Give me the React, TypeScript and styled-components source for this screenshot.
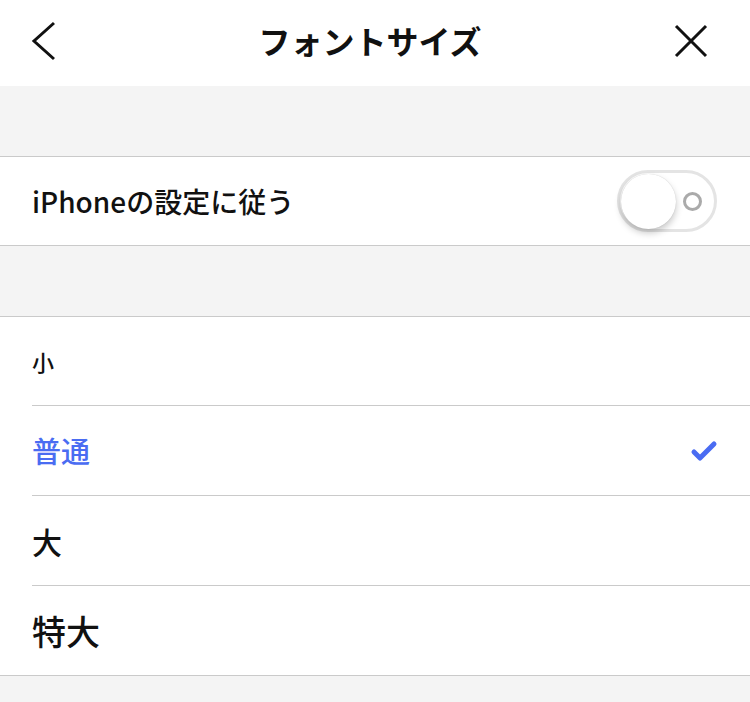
import React, { useState } from 'react';
import styled, { createGlobalStyle } from 'styled-components';

const GlobalStyle = createGlobalStyle`
    html, body {
        margin: 0;
        padding: 0;
        background: #f4f4f4;
        font-family: "Noto Sans CJK JP", "Noto Sans", sans-serif;
        color: #111;
    }
`;

const Page = styled.div`
    width: 750px;
    min-height: 702px;
    background: #f4f4f4;
`;

const Header = styled.div`
    height: 86px;
    background: white;
    display: flex;
    align-items: center;
    justify-content: space-between;
    padding: 0 42px 4px 30px;
    box-sizing: border-box;
    .title{
        font-size: 32px;
        font-weight: 700;
        margin-left: 10px;
        margin-top: -2px;
    }
`;

const IconButton = styled.button`
    height: 40px;
    padding: 0;
    border: none;
    background: none;
    display: flex;
    align-items: center;
    justify-content: center;
`;

const Gap = styled.div`
    height: 70px;
`;

const Section = styled.div`
    background: white;
    border-top: 1px solid #cacaca;
    border-bottom: 1px solid #cacaca;
`;

const Row = styled.div<{ $divider?: boolean }>`
    height: ${p => (p.$divider ? 89 : 88)}px;
    margin-left: 32px;
    padding-right: 32px;
    display: flex;
    align-items: center;
    justify-content: space-between;
    border-top: ${p => (p.$divider ? '1px solid #cacaca' : 'none')};
`;

const Label = styled.span<{ $size: number; $active?: boolean }>`
    font-size: ${p => p.$size}px;
    font-weight: 500;
    color: ${p => (p.$active ? '#4a6cf2' : '#111')};
    line-height: 1;
`;

const Track = styled.div`
    width: 100px;
    height: 62px;
    border-radius: 31px;
    border: 3px solid #e4e4e4;
    box-sizing: border-box;
    background: white;
    display: flex;
    align-items: center;
    justify-content: space-between;
    padding: 0 12px 0 1px;
    margin-right: 1px;
`;

const Knob = styled.div`
    width: 55px;
    height: 55px;
    border-radius: 50%;
    background: white;
    box-shadow: 0 4px 7px rgba(0, 0, 0, 0.22), 0 0 1px rgba(0, 0, 0, 0.2);
`;

const Ring = styled.div`
    width: 13px;
    height: 13px;
    border-radius: 50%;
    border: 3px solid #aaaaaa;
`;

const sizes = [
    { label: '小', size: 22 },
    { label: '普通', size: 29 },
    { label: '大', size: 30 },
    { label: '特大', size: 34 },
];

function App() {
    const [selected, setSelected] = useState(1);
    return (
        <>
            <GlobalStyle />
            <Page>
                <Header>
                    <IconButton>
                        <svg width="26" height="40" viewBox="0 0 26 40">
                            <polyline points="24,2 4,20 24,38" fill="none" stroke="#111" strokeWidth="3" />
                        </svg>
                    </IconButton>
                    <div className="title">フォントサイズ</div>
                    <IconButton>
                        <svg width="34" height="34" viewBox="0 0 34 34">
                            <path d="M2 2 L32 32 M32 2 L2 32" fill="none" stroke="#111" strokeWidth="3" />
                        </svg>
                    </IconButton>
                </Header>
                <Gap />
                <Section>
                    <Row>
                        <Label $size={28}>iPhoneの設定に従う</Label>
                        <Track>
                            <Knob />
                            <Ring />
                        </Track>
                    </Row>
                </Section>
                <Gap />
                <Section>
                    {sizes.map((s, i) => (
                        <Row key={s.label} $divider={i > 0} onClick={() => setSelected(i)}>
                            <Label $size={s.size} $active={selected === i}>{s.label}</Label>
                            {selected === i && (
                                <svg width="28" height="22" viewBox="0 0 28 22">
                                    <polyline points="4,12 10,18 24,4" fill="none" stroke="#4a6cf2" strokeWidth="5" strokeLinecap="round" strokeLinejoin="round" />
                                </svg>
                            )}
                        </Row>
                    ))}
                </Section>
            </Page>
        </>
    );
}

export default App;
